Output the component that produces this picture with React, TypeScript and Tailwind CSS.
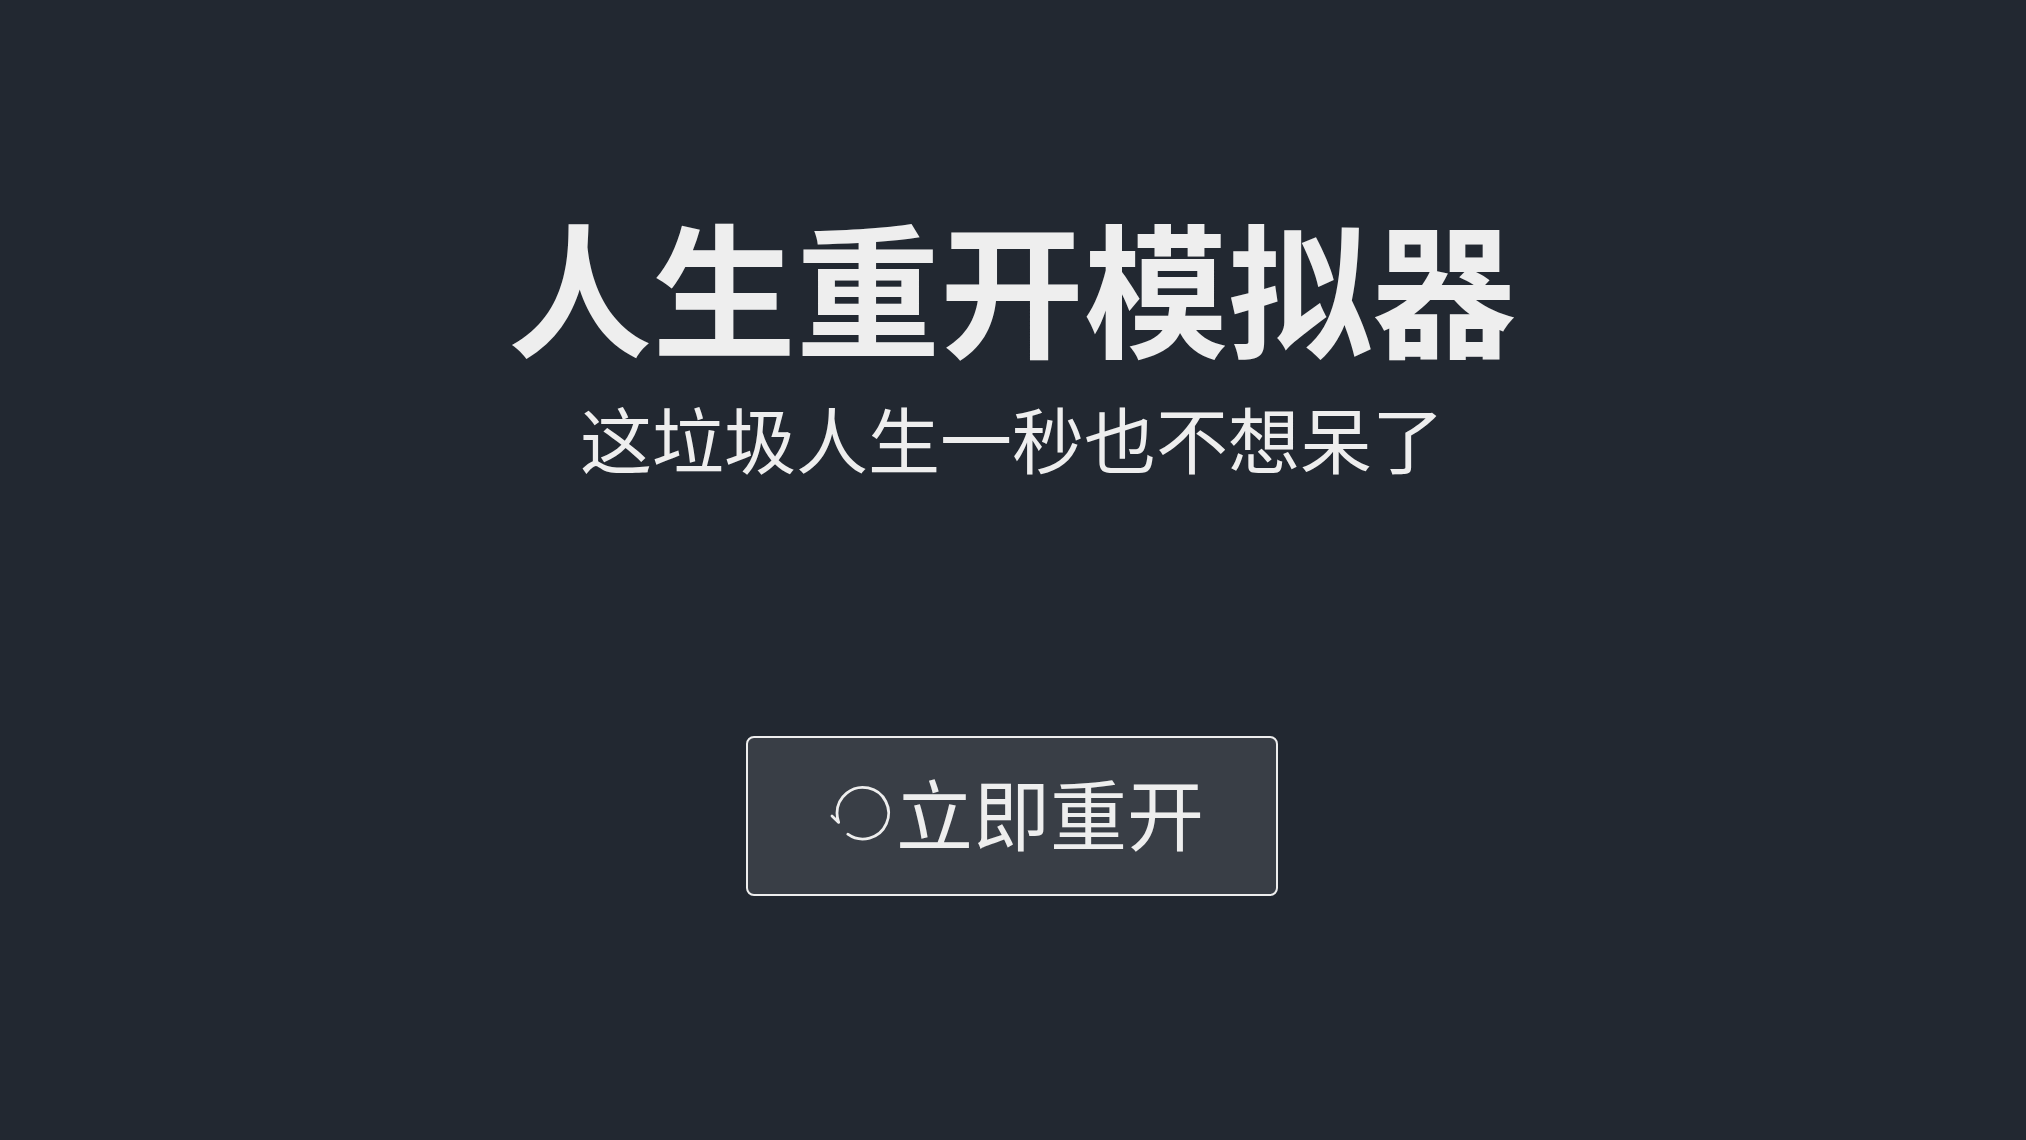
function RestartIcon() {
  return (
    <svg
      viewBox="0 0 76 76"
      className="size-19 shrink-0"
      fill="none"
      stroke="currentColor"
      strokeWidth="2.8"
      strokeLinecap="round"
      strokeLinejoin="round"
      aria-hidden="true"
    >
      <path d="M27.8 60.2A25.8 25.8 0 1 0 17 39Q17 43.5 18.7 48.4L12 42" />
    </svg>
  );
}

export default function App() {
  return (
    <main className="flex min-h-screen flex-col items-center bg-[#222831] pt-[180px] pr-[2px] font-['Noto_Sans_CJK_SC',sans-serif] text-[#eeeeee]">
      <h1 className="text-center text-[144px] leading-[208px] font-bold">人生重开模拟器</h1>
      <p className="text-center text-[72px] leading-[98px]">这垃圾人生一秒也不想呆了</p>
      <button
        type="button"
        className="mt-[250px] flex h-40 w-[532px] items-center justify-center rounded-lg border-2 border-[#eeeeee] bg-[#393e46] pb-2 text-[77px]"
      >
        <RestartIcon />
        立即重开
      </button>
    </main>
  );
}
